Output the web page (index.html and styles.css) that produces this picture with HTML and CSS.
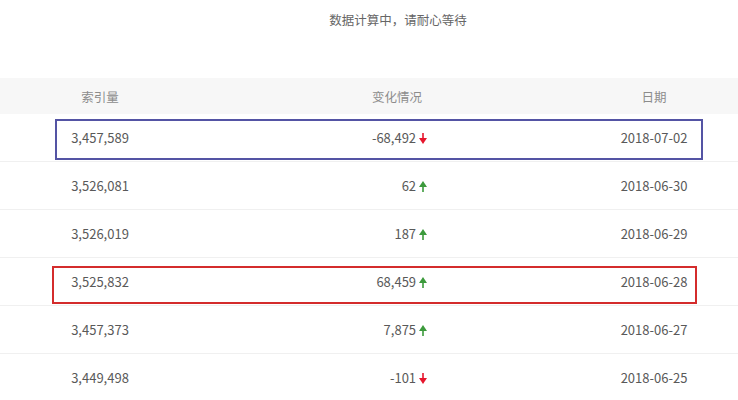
FILE: index.html
```html
<!DOCTYPE html>
<html lang="zh-CN">
<head>
  <meta charset="UTF-8">
  <title>索引量</title>
  <link rel="stylesheet" href="styles.css">
</head>
<body>
  <p class="tip">数据计算中，请耐心等待</p>

  <div class="table">
    <div class="row head">
      <div class="c1">索引量</div>
      <div class="c2"><span class="val">变化情况</span></div>
      <div class="c3">日期</div>
    </div>
    <div class="row">
      <div class="c1">3,457,589</div>
      <div class="c2"><span class="val">-68,492 <svg class="arrow down" viewBox="0 0 8 11"><path d="M4 0V6"/><polygon points="0,5 8,5 4,11"/></svg></span></div>
      <div class="c3">2018-07-02</div>
    </div>
    <div class="row">
      <div class="c1">3,526,081</div>
      <div class="c2"><span class="val">62 <svg class="arrow up" viewBox="0 0 8 11"><path d="M4 11V5"/><polygon points="0,6 8,6 4,0"/></svg></span></div>
      <div class="c3">2018-06-30</div>
    </div>
    <div class="row">
      <div class="c1">3,526,019</div>
      <div class="c2"><span class="val">187 <svg class="arrow up" viewBox="0 0 8 11"><path d="M4 11V5"/><polygon points="0,6 8,6 4,0"/></svg></span></div>
      <div class="c3">2018-06-29</div>
    </div>
    <div class="row">
      <div class="c1">3,525,832</div>
      <div class="c2"><span class="val">68,459 <svg class="arrow up" viewBox="0 0 8 11"><path d="M4 11V5"/><polygon points="0,6 8,6 4,0"/></svg></span></div>
      <div class="c3">2018-06-28</div>
    </div>
    <div class="row">
      <div class="c1">3,457,373</div>
      <div class="c2"><span class="val">7,875 <svg class="arrow up" viewBox="0 0 8 11"><path d="M4 11V5"/><polygon points="0,6 8,6 4,0"/></svg></span></div>
      <div class="c3">2018-06-27</div>
    </div>
    <div class="row">
      <div class="c1">3,449,498</div>
      <div class="c2"><span class="val">-101 <svg class="arrow down" viewBox="0 0 8 11"><path d="M4 0V6"/><polygon points="0,5 8,5 4,11"/></svg></span></div>
      <div class="c3">2018-06-25</div>
    </div>
  </div>

  <div class="mark blue"></div>
  <div class="mark red"></div>
</body>
</html>
```

FILE: styles.css
```css
body { margin: 0; font-family: "Noto Sans CJK SC", "Noto Sans", sans-serif; font-size: 13px; color: #595959; background: #fff; }
.tip { margin: 0; padding: 11px 0 0 58px; height: 67px; line-height: 18px; text-align: center; color: #666; font-size: 12.5px; }
.table { width: 738px; }
.row { display: grid; grid-template-columns: 200px 394px 120px 1fr; height: 47px; align-items: center; border-bottom: 1px solid #f0f0f0; }
.row.head { height: 36px; background: #f7f7f7; color: #8c8c8c; font-size: 12.5px; border-bottom: none; }
.c1, .c2, .c3 { text-align: center; }
.val { display: inline-block; width: 60px; text-align: right; white-space: nowrap; }
.head .val { text-align: center; }
.arrow { width: 8px; height: 11px; vertical-align: -1px; }
.arrow path { stroke-width: 1.6; }
.arrow.down { fill: #e6162d; }
.arrow.down path { stroke: #e6162d; }
.arrow.up { fill: #3c9a3c; }
.arrow.up path { stroke: #3c9a3c; }
.mark { position: absolute; box-sizing: border-box; border: 2px solid; }
.mark.blue { left: 55px; top: 119px; width: 648px; height: 41px; border-color: #5454a4; }
.mark.red { left: 52px; top: 266px; width: 645px; height: 38px; border-color: #d42c2c; }
```
